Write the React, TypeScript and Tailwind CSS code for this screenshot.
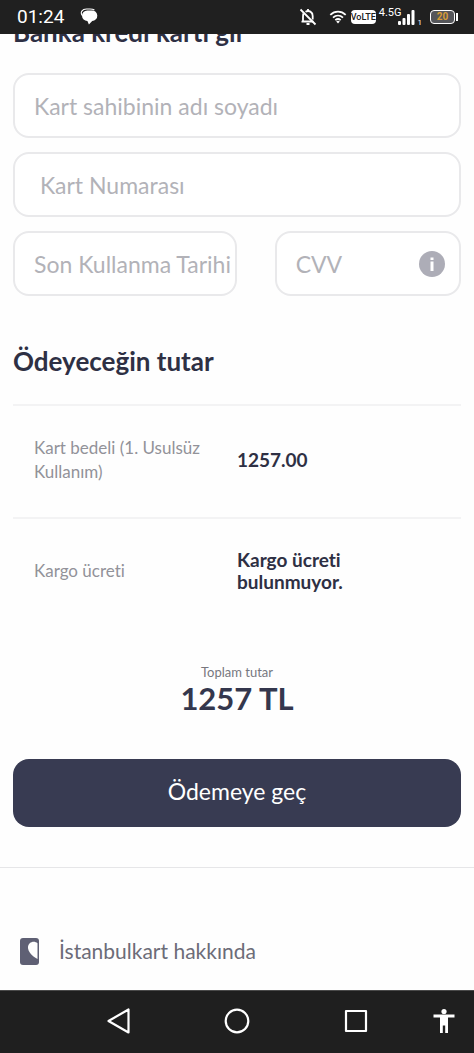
import { useState } from 'react'
import type { ReactNode } from 'react'

const SATIRLAR = [
  { etiket: 'Kart bedeli (1. Usulsüz Kullanım)', deger: '1257.00' },
  { etiket: 'Kargo ücreti', deger: 'Kargo ücreti bulunmuyor.' },
]

const headingClass = 'text-[26px] leading-9 font-bold'
const fieldClass =
  'h-[65px] w-full min-w-0 rounded-2xl border-2 border-[#e9e9eb] bg-white pl-[19px] text-[23px] text-[#383b52] outline-none placeholder:text-[#b2b2b8] focus:border-[#383b52]'

function StatusBar() {
  return (
    <header className="flex h-[34px] items-center justify-between bg-[#202020] pr-4 pl-[17px] font-[Roboto,sans-serif] text-white">
      <div className="flex items-center gap-4">
        <span className="text-[19px] leading-5">01:24</span>
        <svg viewBox="0 0 18 18" className="h-[18px] w-[18px]" aria-hidden="true">
          <path
            d="M2.4 7.6C-.2 4.500 2.2 1 6.500 1H10c2 0 3.400.3 4.400 1"
            fill="none"
            stroke="#fff"
            strokeWidth="1.1"
          />
          <path d="M7.200 2.400h4.600a5.300 5.300 0 0 1 .4 10.600l-3.300 3.600-1.500-3.600A5.300 5.300 0 0 1 7.200 2.400z" fill="#fff" />
        </svg>
      </div>
      <div className="flex items-center">
        <svg
          viewBox="0 0 18 18"
          className="mr-3 h-[18px] w-[18px]"
          fill="none"
          stroke="#fff"
          strokeWidth="1.8"
          aria-hidden="true"
        >
          <path d="M4.5 5.5C4 6.5 4 7.5 4 9v4.5h9M6.5 3.7C10 1.8 13.7 4 13.7 8v3.5M2.5 13.7h12" />
          <path d="M9 1v2M7.5 16h3" />
          <path d="M1.5 1.5l15 15" />
        </svg>
        <svg
          viewBox="0 0 18 14"
          className="mr-1 h-[14px] w-[18px]"
          fill="none"
          stroke="#fff"
          strokeWidth="1.8"
          aria-hidden="true"
        >
          <path d="M1.3 4.8c4.6-4.2 10.8-4.2 15.4 0M4 7.6c3-2.7 7-2.7 10 0M6.3 10.2c1.7-1.5 3.7-1.5 5.4 0" />
          <path d="M7.2 11.5 9 13.5l1.8-2A2.7 2.7 0 0 0 7.2 11.5z" fill="#fff" stroke="none" />
        </svg>
        <span className="flex h-[14px] w-[25px] items-center justify-center rounded-sm bg-white text-[9px] leading-3 font-medium text-[#202020]">
          VoLTE
        </span>
        <span className="mb-2 ml-[3px] text-[11px] leading-3">4.5G</span>
        <svg viewBox="0 0 18 16" className="-ml-1 h-4 w-[18px]" fill="#fff" aria-hidden="true">
          <rect x="0" y="12" width="3" height="4" rx="1" />
          <rect x="4.5" y="9" width="3" height="7" rx="1" />
          <rect x="9" y="5" width="3" height="11" rx="1" />
          <rect x="13.5" y="1" width="3" height="15" rx="1" />
        </svg>
        <span className="mt-3 mr-2 ml-0.5 text-[8px] leading-2">1</span>
        <div className="flex items-center gap-px">
          <span className="flex h-[14px] w-[25px] items-center justify-center rounded-sm border border-white bg-[#55565a] text-[10px] leading-3 font-bold text-[#d79b35]">
            20
          </span>
          <span className="h-2 w-0.5 bg-white" />
        </div>
      </div>
    </header>
  )
}

function NavButton({ label, className, children }: { label: string; className?: string; children: ReactNode }) {
  return (
    <div className={`flex ${className ?? ''}`}>
      <button type="button" aria-label={label} className="h-[26px] w-[26px] text-white">
        {children}
      </button>
    </div>
  )
}

function NavBar() {
  return (
    <nav className="grid h-[63px] grid-cols-8 items-center justify-items-center border-t border-[#4a4a4a] bg-[#1f1f1f] pb-0.5">
      <NavButton label="Geri" className="col-span-2 col-start-2">
        <svg viewBox="0 0 26 26" fill="none" stroke="currentColor" strokeWidth="2.2" strokeLinejoin="round">
          <path d="M22.5 1.5v23L2.5 13z" />
        </svg>
      </NavButton>
      <NavButton label="Ana ekran" className="col-span-2">
        <svg viewBox="0 0 26 26" fill="none" stroke="currentColor" strokeWidth="2.2">
          <circle cx="13" cy="13" r="11.3" />
        </svg>
      </NavButton>
      <NavButton label="Son uygulamalar" className="col-span-2">
        <svg viewBox="0 0 26 26" fill="none" stroke="currentColor" strokeWidth="2.2" strokeLinejoin="round">
          <rect x="3" y="3" width="20" height="20" />
        </svg>
      </NavButton>
      <NavButton label="Erişilebilirlik">
        <svg viewBox="0 0 26 26" fill="currentColor">
          <circle cx="13" cy="3.5" r="2.6" />
          <path d="M2.5 6.6h21v2.9H17V25h-2.8v-7.5h-2.4V25H9V9.5H2.5z" />
        </svg>
      </NavButton>
    </nav>
  )
}

export default function App() {
  const [adSoyad, setAdSoyad] = useState('')
  const [kartNo, setKartNo] = useState('')
  const [sonKullanma, setSonKullanma] = useState('')
  const [cvv, setCvv] = useState('')

  return (
    <div className="flex min-h-screen flex-col bg-[#fefefe] font-[Lato,'Noto_Sans',sans-serif] text-[#2e3044] [font-variant-ligatures:none]">
      <StatusBar />

      <main className="flex-1 overflow-hidden">
        <form className="px-[13px]" onSubmit={(e) => e.preventDefault()}>
          {/* scrolled halfway under the status bar */}
          <h2 className={`-mt-5 ${headingClass}`}>Banka kredi kartı gir</h2>

          <div className="mt-[23px] flex flex-col gap-[14px]">
            <input
              type="text"
              aria-label="Kart sahibinin adı soyadı"
              placeholder="Kart sahibinin adı soyadı"
              value={adSoyad}
              onChange={(e) => setAdSoyad(e.target.value)}
              className={fieldClass}
            />
            <input
              type="text"
              inputMode="numeric"
              aria-label="Kart Numarası"
              placeholder=" Kart Numarası"
              value={kartNo}
              onChange={(e) => setKartNo(e.target.value)}
              className={fieldClass}
            />
            <div className="flex gap-[38px]">
              <div className="min-w-0 flex-[6]">
                <input
                  type="text"
                  aria-label="Son Kullanma Tarihi"
                  placeholder="Son Kullanma Tarihi"
                  value={sonKullanma}
                  onChange={(e) => setSonKullanma(e.target.value)}
                  className={fieldClass}
                />
              </div>
              <div className="relative min-w-0 flex-[5]">
                <input
                  type="text"
                  inputMode="numeric"
                  aria-label="CVV"
                  placeholder="CVV"
                  value={cvv}
                  onChange={(e) => setCvv(e.target.value)}
                  className={fieldClass}
                />
                <button type="button" aria-label="CVV nedir?" className="absolute top-5 right-4 h-[26px] w-[26px]">
                  <svg viewBox="0 0 26 26">
                    <circle cx="13" cy="13" r="13" fill="#adadb7" />
                    <path d="M11.5 6.5h3V9h-3zM11.5 10.5h3V20h-3z" fill="#fff" />
                  </svg>
                </button>
              </div>
            </div>
          </div>

          <h2 className={`mt-[47px] ${headingClass}`}>Ödeyeceğin tutar</h2>

          <table className="mt-[25px] w-full table-fixed text-left">
            <tbody>
              {SATIRLAR.map((satir) => (
                <tr key={satir.etiket} className="border-t-2 border-[#f3f3f4]">
                  <th
                    scope="row"
                    className="w-1/2 pt-[30px] pr-6 pb-[33px] pl-[21px] text-[17px] leading-6 font-normal text-[#929299]"
                  >
                    {satir.etiket}
                  </th>
                  <td className="pt-[30px] pr-20 pb-[33px] text-[19px] leading-[22px] font-bold">{satir.deger}</td>
                </tr>
              ))}
            </tbody>
          </table>

          <div className="mt-9 text-center">
            <p className="text-[13px] leading-5 text-[#77777f]">Toplam tutar</p>
            <p className="text-[31px] leading-8 font-bold text-[#34374d]">1257 TL</p>
          </div>

          <button
            type="submit"
            className="mt-[45px] h-[68px] w-full rounded-2xl bg-[#383b52] pb-1 text-[23px] text-white"
          >
            Ödemeye geç
          </button>
        </form>

        <div className="mt-10 border-t border-[#e6e6e8] px-5 pt-[67px] pb-[23px]">
          <a href="#hakkinda" className="flex h-8 items-center gap-5 text-[21px] text-[#6c6c78]">
            <svg viewBox="0 0 19 27" className="h-[27px] w-[19px]" aria-hidden="true">
              <rect width="19" height="27" rx="3" fill="#5f6074" />
              <path d="M17.5 21C11.5 17.5 8 13.8 8 9.2c0-5.2 6.3-7.2 9.5-4z" fill="#fefefe" />
            </svg>
            İstanbulkart hakkında
          </a>
        </div>
      </main>

      <NavBar />
    </div>
  )
}
